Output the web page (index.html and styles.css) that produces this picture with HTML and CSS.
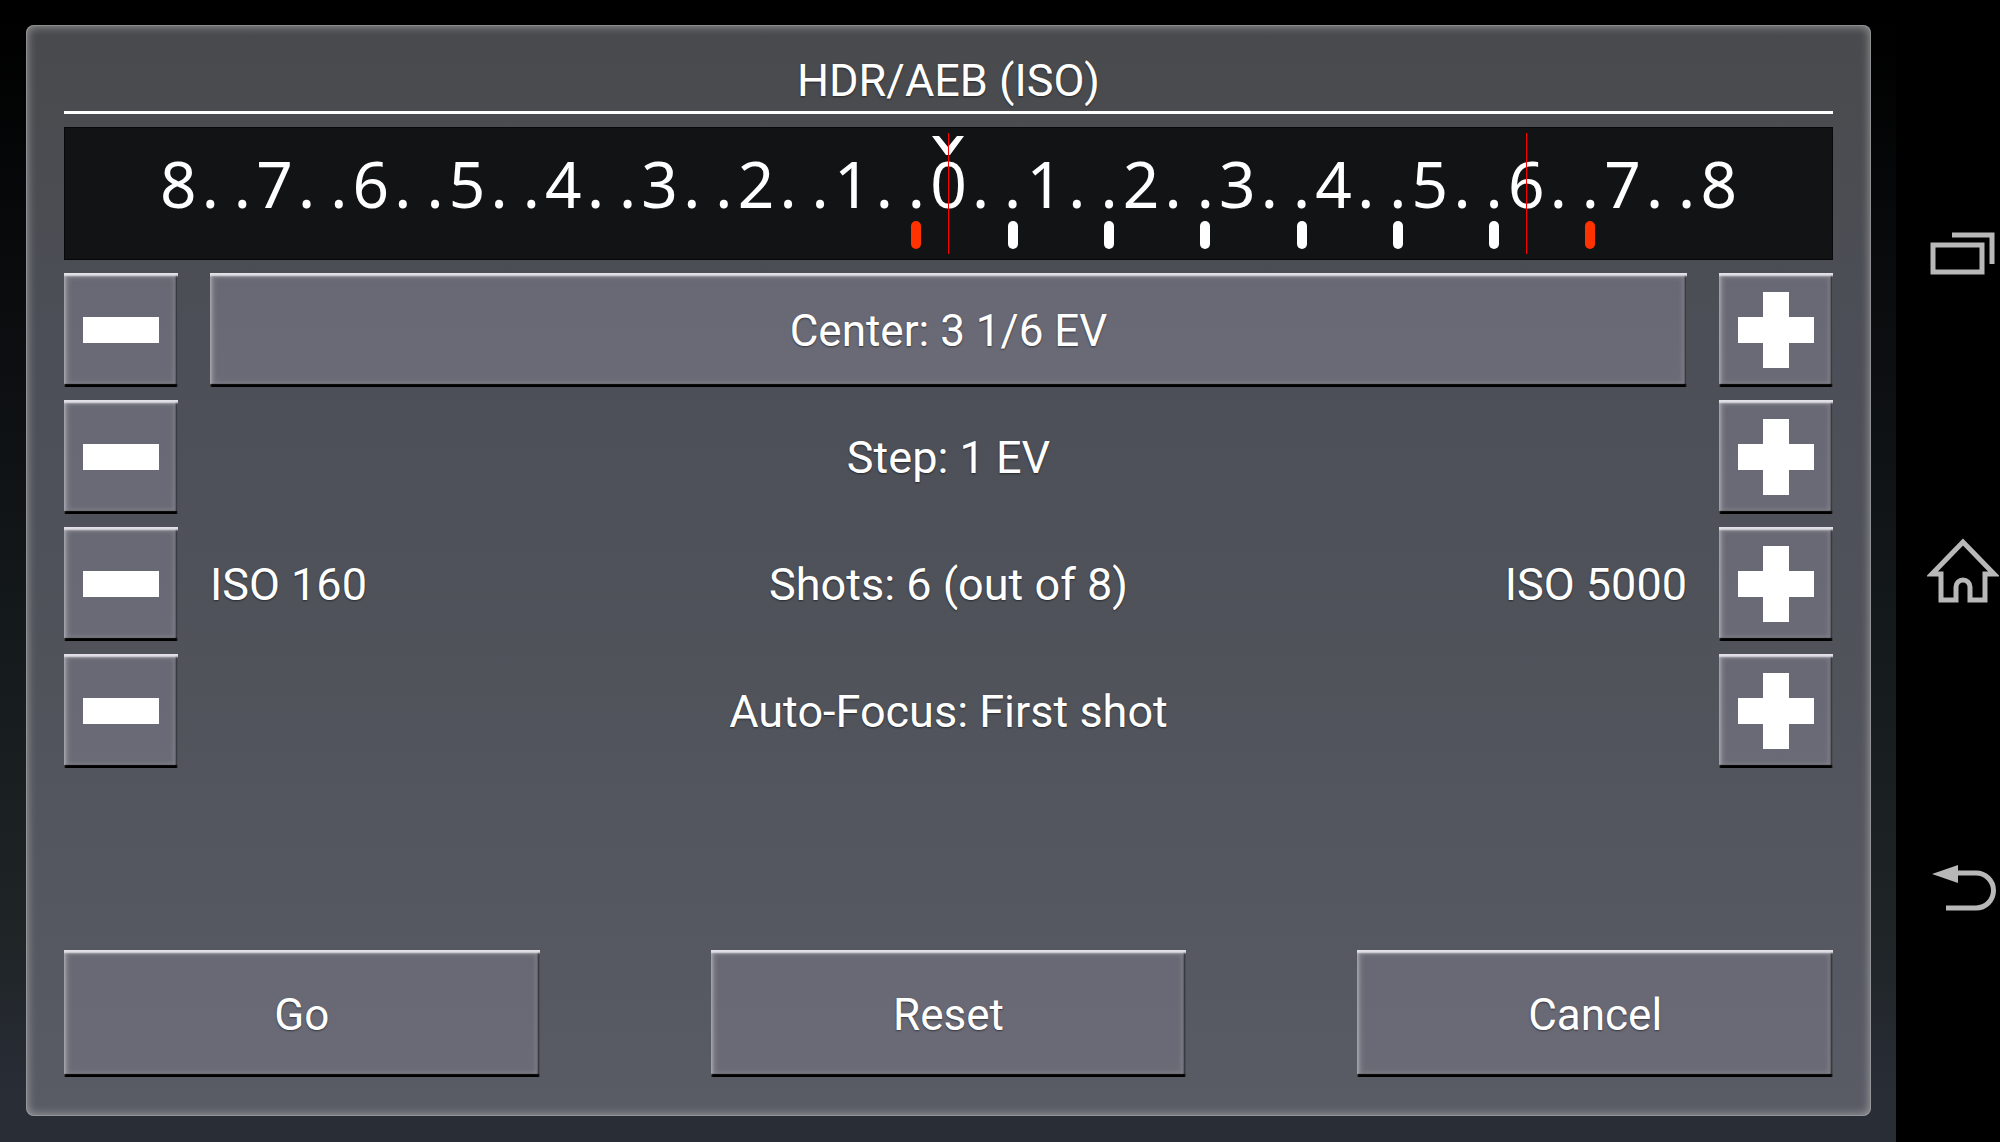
FILE: index.html
```html
<!DOCTYPE html>
<html lang="en">
<head>
<meta charset="utf-8">
<title>HDR/AEB (ISO)</title>
<link rel="stylesheet" href="styles.css">
</head>
<body>
<main class="screen">
  <section class="panel">
    <h1 class="title">HDR/AEB (ISO)</h1>

    <div class="scale">
      <div class="layer digits">
        <span>8</span><span>.</span><span>.</span><span>7</span><span>.</span><span>.</span><span>6</span><span>.</span><span>.</span><span>5</span><span>.</span><span>.</span><span>4</span><span>.</span><span>.</span><span>3</span><span>.</span><span>.</span><span>2</span><span>.</span><span>.</span><span>1</span><span>.</span><span>.</span><span>0</span><span>.</span><span>.</span><span>1</span><span>.</span><span>.</span><span>2</span><span>.</span><span>.</span><span>3</span><span>.</span><span>.</span><span>4</span><span>.</span><span>.</span><span>5</span><span>.</span><span>.</span><span>6</span><span>.</span><span>.</span><span>7</span><span>.</span><span>.</span><span>8</span>
      </div>
      <div class="layer marks">
        <svg class="caret" style="grid-column:25" viewBox="0 0 32 20" aria-hidden="true"><path d="M0 0H7L16 11L25 0H32L18 19H14Z"/></svg>
        <i class="shot out" style="grid-column:24"></i>
        <i class="shot" style="grid-column:27"></i>
        <i class="shot" style="grid-column:30"></i>
        <i class="shot" style="grid-column:33"></i>
        <i class="shot" style="grid-column:36"></i>
        <i class="shot" style="grid-column:39"></i>
        <i class="shot" style="grid-column:42"></i>
        <i class="shot out" style="grid-column:45"></i>
        <i class="limit" style="grid-column:25"></i>
        <i class="limit" style="grid-column:43"></i>
      </div>
    </div>

    <div class="row">
      <button class="btn step" aria-label="Decrease center"><svg viewBox="0 0 76 76"><path d="M0 25H76V51H0Z"/></svg></button>
      <button class="btn value">Center: 3 1/6 EV</button>
      <button class="btn step" aria-label="Increase center"><svg viewBox="0 0 76 76"><path d="M25 0H51V25H76V51H51V76H25V51H0V25H25Z"/></svg></button>
    </div>
    <div class="row">
      <button class="btn step" aria-label="Decrease step"><svg viewBox="0 0 76 76"><path d="M0 25H76V51H0Z"/></svg></button>
      <div class="info"><span class="main">Step: 1 EV</span></div>
      <button class="btn step" aria-label="Increase step"><svg viewBox="0 0 76 76"><path d="M25 0H51V25H76V51H51V76H25V51H0V25H25Z"/></svg></button>
    </div>
    <div class="row">
      <button class="btn step" aria-label="Fewer shots"><svg viewBox="0 0 76 76"><path d="M0 25H76V51H0Z"/></svg></button>
      <div class="info"><span>ISO 160</span><span class="main">Shots: 6 (out of 8)</span><span class="end">ISO 5000</span></div>
      <button class="btn step" aria-label="More shots"><svg viewBox="0 0 76 76"><path d="M25 0H51V25H76V51H51V76H25V51H0V25H25Z"/></svg></button>
    </div>
    <div class="row">
      <button class="btn step" aria-label="Previous focus mode"><svg viewBox="0 0 76 76"><path d="M0 25H76V51H0Z"/></svg></button>
      <div class="info"><span class="main">Auto-Focus: First shot</span></div>
      <button class="btn step" aria-label="Next focus mode"><svg viewBox="0 0 76 76"><path d="M25 0H51V25H76V51H51V76H25V51H0V25H25Z"/></svg></button>
    </div>

    <footer class="actions">
      <button class="btn action">Go</button>
      <button class="btn action">Reset</button>
      <button class="btn action">Cancel</button>
    </footer>
  </section>
</main>

<nav class="system">
  <button class="key" aria-label="Recent apps"><svg viewBox="0 0 72 72"><path d="M6 27H55V54H6ZM25 17H65V46" /></svg></button>
  <button class="key" aria-label="Home"><svg viewBox="0 0 72 72"><path d="M36 7L5 39H14V65H29V52A7 7 0 0 1 43 52V65H58V39H67Z"/></svg></button>
  <button class="key" aria-label="Back"><svg viewBox="0 0 72 72"><path d="M29 21H49A17 17 0 0 1 49 56H19"/><path class="solid" d="M5 22L31 13V31Z"/></svg></button>
</nav>
</body>
</html>
```
FILE: styles.css
```css
* {
  box-sizing: border-box;
}

body {
  margin: 0;
  min-height: 100vh;
  display: flex;
  background: #000;
  color: #fff;
  font-family: Roboto, "Liberation Sans", sans-serif;
  font-size: 44px;
  line-height: 52px;
}

button {
  margin: 0;
  padding: 0;
  border: 0;
  color: inherit;
  font: inherit;
}

.screen {
  flex: 1;
  display: flex;
  padding: 25px 25px 26px 26px;
  background: linear-gradient(#000 2%, #0b0d0f 28%, #14191c 55%, #1f2427 82%, #292d36 96%);
}

.panel {
  flex: 1;
  display: flex;
  flex-direction: column;
  gap: 13px;
  padding: 30px 38px 39px 38px;
  border-radius: 8px;
  background: linear-gradient(#494a4d, #4c4f57 30%, #50535a 60%, #595c65);
  box-shadow:
    inset 0 0 0 1px rgb(190 190 190 / 35%),
    inset 0 0 8px 2px rgb(190 190 190 / 60%);
}

.title {
  margin: 0;
  padding-bottom: 4px;
  border-bottom: 3px solid #fff;
  font-size: 45px;
  font-weight: 400;
  text-align: center;
}

.title,
.info,
.btn {
  text-shadow: 0 1px 2px rgb(0 0 0 / 50%);
}

.scale {
  display: grid;
  justify-content: center;
  grid-template-columns: 89%;
  height: 133px;
  border: 1px solid #08080a;
  background: #121315;
}

.layer {
  grid-area: 1 / 1;
  display: grid;
  grid-template-columns: repeat(49, minmax(0, 1fr));
}

.digits {
  padding-top: 24px;
  font-family: "Noto Sans", "Open Sans", sans-serif;
  font-size: 64px;
  line-height: 64px;
}

.digits span {
  display: flex;
  justify-content: center;
}

.marks {
  grid-template-rows: 100%;
  justify-items: center;
}

.caret {
  grid-row: 1;
  width: 32px;
  height: 20px;
  margin-top: 8px;
  fill: #fff;
}

.shot {
  grid-row: 1;
  width: 10px;
  height: 28px;
  margin-top: 93px;
  border-radius: 5px;
  background: #fff;
}

.out {
  background: #ff3200;
}

.limit {
  grid-row: 1;
  width: 1px;
  height: 121px;
  margin-top: 5px;
  background: #ff0000;
}

.row {
  display: grid;
  grid-template-columns: 114px 1fr 114px;
  gap: 32px;
}

.btn {
  padding-top: 2px;
  background: linear-gradient(#686874, #6b6b77);
  box-shadow:
    inset 0 3px 2px #e4e2e8,
    inset 0 -3px 1px #000,
    inset -2px 0 2px #15151c,
    inset 2px 0 3px rgb(180 180 190 / 50%),
    inset 0 0 5px 4px rgb(150 150 158 / 60%);
}

.step {
  display: grid;
  place-items: center;
  height: 114px;
  padding: 0;
}

.step svg {
  width: 76px;
  height: 76px;
  fill: #fff;
}

.info {
  display: grid;
  grid-template-columns: 1fr auto 1fr;
  align-items: center;
  padding-top: 2px;
  font-size: 45px;
}

.main {
  grid-column: 2;
}

.end {
  text-align: right;
}

.actions {
  display: grid;
  grid-template-columns: repeat(3, 1fr);
  gap: 171px;
  margin-top: auto;
}

.action {
  height: 127px;
}

.system {
  width: 104px;
  display: flex;
  flex-direction: column;
  align-items: flex-end;
  justify-content: center;
  gap: 245px;
}

.key {
  width: 73px;
  height: 72px;
  background: none;
}

.key svg {
  display: block;
  width: 72px;
  height: 72px;
  fill: none;
  stroke: #b8b8b8;
  stroke-width: 5px;
}

.key .solid {
  fill: #b8b8b8;
  stroke: none;
}
```
